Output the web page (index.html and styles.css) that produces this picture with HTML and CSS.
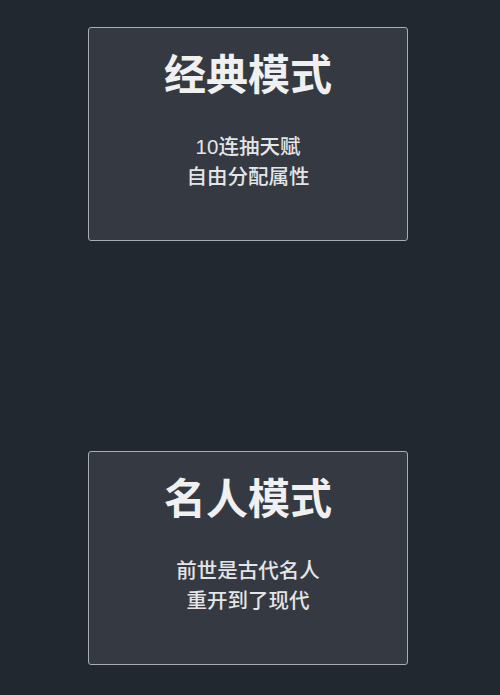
FILE: index.html
```html
<!DOCTYPE html>
<html lang="zh">
<head>
    <meta charset="UTF-8">
    <meta name="viewport" content="width=device-width, initial-scale=1.0">
    <title>模式选择</title>
    <link rel="stylesheet" href="styles.css">
</head>
<body>
    <div class="modes">
        <div class="mode">
            <h2 class="mode-title">经典模式</h2>
            <p class="mode-desc">10连抽天赋<br>自由分配属性</p>
        </div>
        <div class="mode">
            <h2 class="mode-title">名人模式</h2>
            <p class="mode-desc">前世是古代名人<br>重开到了现代</p>
        </div>
    </div>
</body>
</html>
```

FILE: styles.css
```css
html, body {
    margin: 0;
    height: 100%;
}

body {
    background-color: #222830;
    color: #eeeeee;
    font-family: "Liberation Sans", "Noto Sans CJK SC", sans-serif;
}

.modes {
    display: flex;
    flex-direction: column;
    align-items: center;
    gap: 210px;
    padding: 27px 4px 0 0;
}

.mode {
    box-sizing: border-box;
    width: 320px;
    height: 214px;
    padding-top: 23px;
    background-color: #353a42;
    border: 1px solid #a9adb2;
    border-radius: 3px;
    text-align: center;
}

.mode-title {
    margin: 0;
    font-size: 42px;
    line-height: 50px;
    font-weight: bold;
    color: #f0f0f0;
}

.mode-desc {
    margin: 31px 0 0 0;
    font-size: 20.5px;
    line-height: 30px;
    font-weight: 500;
    color: #e4e5e6;
}
```
